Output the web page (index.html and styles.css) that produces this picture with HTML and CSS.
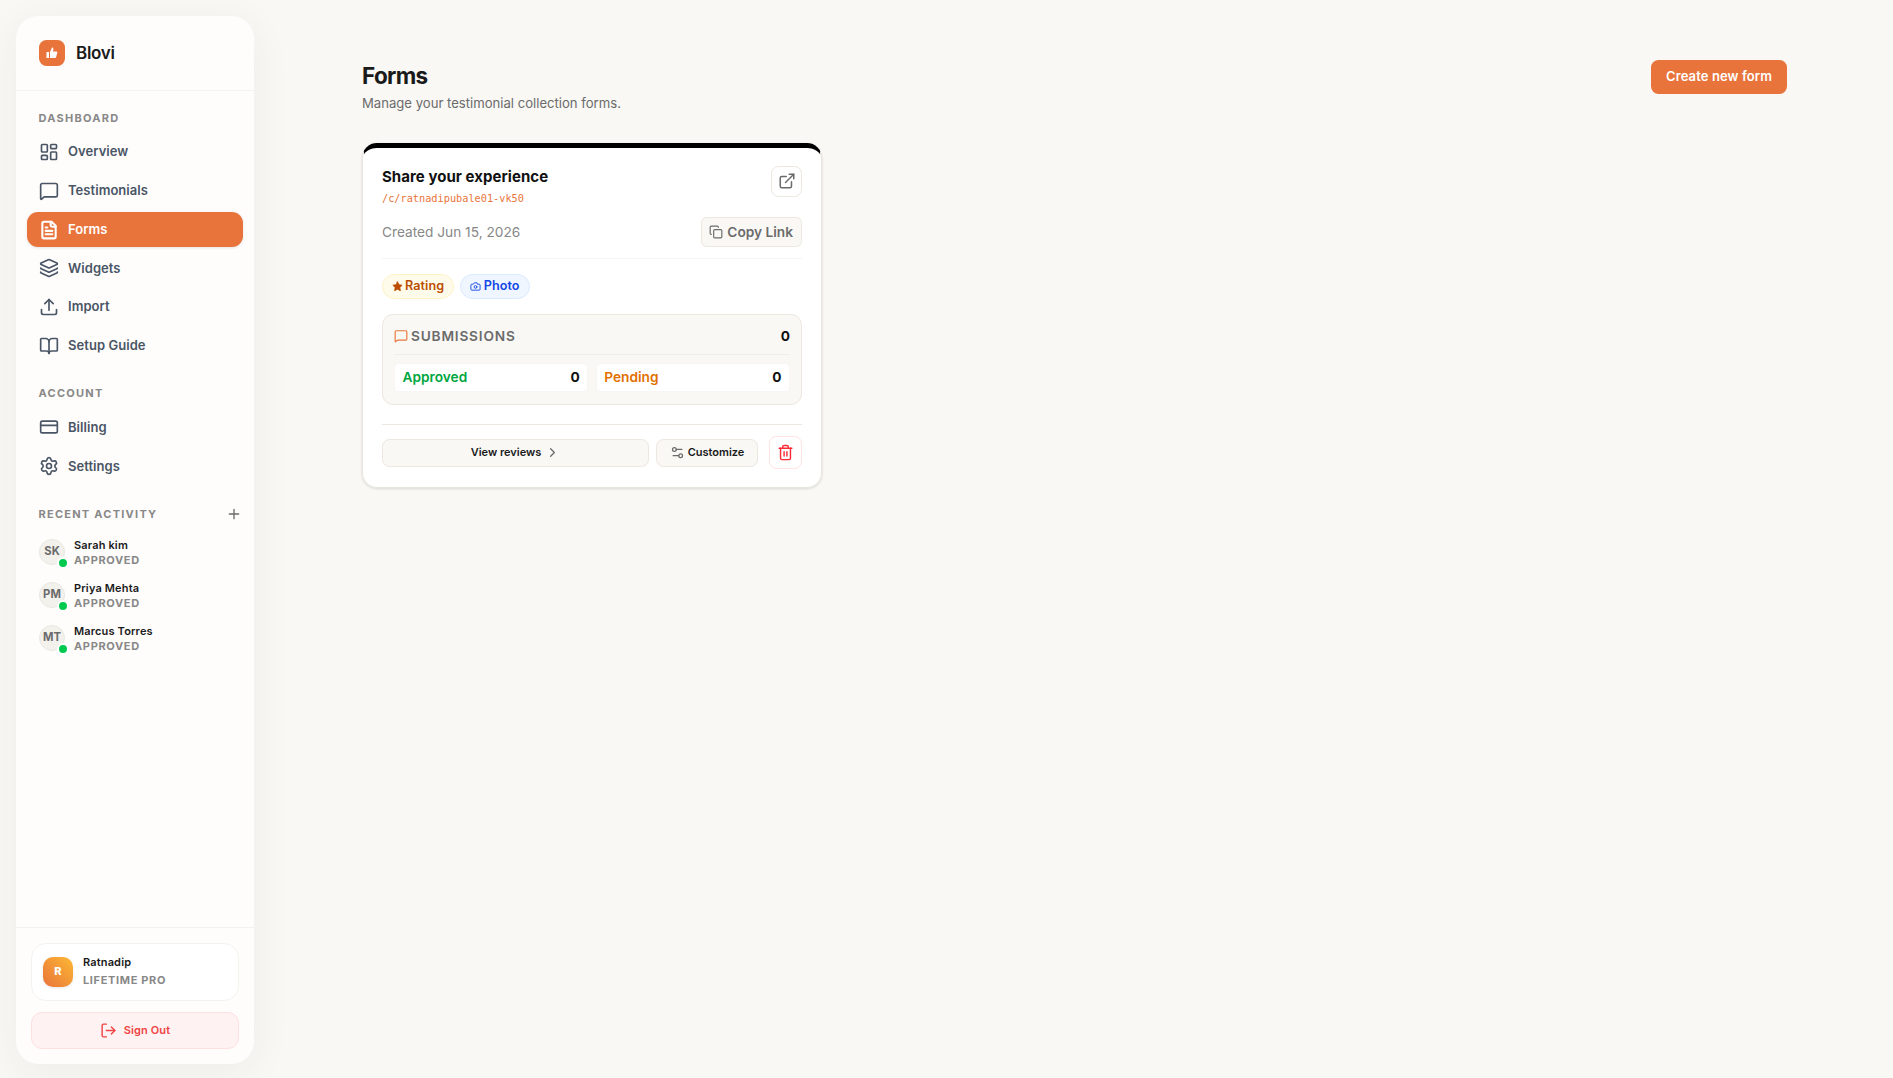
FILE: index.html
```html
<!DOCTYPE html>
<html lang="en">
<head>
    <meta charset="UTF-8">
    <meta name="viewport" content="width=device-width, initial-scale=1.0">
    <title>Forms - Blovi</title>
    <link rel="stylesheet" href="styles.css">
</head>
<body>
    <aside class="sidebar">
        <div class="brand">
            <span class="brand-logo">
                <svg viewBox="0 0 24 24" fill="currentColor"><path d="M1 10h5v12H1zM8 22V10l4-9c2 0 3.200 1.400 2.800 3.400L14 9h6.500c1.500 0 2.400 1.200 2 2.700l-2.200 8.300c-.3 1.200-1.200 2-2.500 2z"/></svg>
            </span>
            <span class="brand-name">Blovi</span>
        </div>

        <nav class="nav">
            <h2 class="nav-label">Dashboard</h2>
            <a class="nav-item" href="#">
                <svg class="icon" viewBox="0 0 24 24"><rect x="3" y="3" width="7" height="9" rx="1"/><rect x="14" y="3" width="7" height="5" rx="1"/><rect x="14" y="12" width="7" height="9" rx="1"/><rect x="3" y="16" width="7" height="5" rx="1"/></svg>
                <span>Overview</span>
            </a>
            <a class="nav-item" href="#">
                <svg class="icon" viewBox="0 0 24 24"><path d="M22 17a2 2 0 0 1-2 2H6.828a2 2 0 0 0-1.414.586l-2.202 2.202A.71.71 0 0 1 2 21.286V5a2 2 0 0 1 2-2h16a2 2 0 0 1 2 2z"/></svg>
                <span>Testimonials</span>
            </a>
            <a class="nav-item active" href="#">
                <svg class="icon" viewBox="0 0 24 24"><path d="M15 2H6a2 2 0 0 0-2 2v16a2 2 0 0 0 2 2h12a2 2 0 0 0 2-2V7Z"/><path d="M14 2v4a2 2 0 0 0 2 2h4"/><path d="M10 9H8"/><path d="M16 13H8"/><path d="M16 17H8"/></svg>
                <span>Forms</span>
            </a>
            <a class="nav-item" href="#">
                <svg class="icon" viewBox="0 0 24 24"><path d="M12.830 2.180a2 2 0 0 0-1.660 0L2.600 6.080a1 1 0 0 0 0 1.830l8.580 3.910a2 2 0 0 0 1.660 0l8.580-3.900a1 1 0 0 0 0-1.830z"/><path d="M2 12a1 1 0 0 0 .58.91l8.600 3.910a2 2 0 0 0 1.650 0l8.580-3.900A1 1 0 0 0 22 12"/><path d="M2 17a1 1 0 0 0 .58.91l8.600 3.910a2 2 0 0 0 1.650 0l8.580-3.900A1 1 0 0 0 22 17"/></svg>
                <span>Widgets</span>
            </a>
            <a class="nav-item" href="#">
                <svg class="icon" viewBox="0 0 24 24"><path d="M12 3v13"/><path d="m17 8-5-5-5 5"/><path d="M21 15v4a2 2 0 0 1-2 2H5a2 2 0 0 1-2-2v-4"/></svg>
                <span>Import</span>
            </a>
            <a class="nav-item" href="#">
                <svg class="icon" viewBox="0 0 24 24"><path d="M12 7v14"/><path d="M3 18a1 1 0 0 1-1-1V4a1 1 0 0 1 1-1h5a4 4 0 0 1 4 4 4 4 0 0 1 4-4h5a1 1 0 0 1 1 1v13a1 1 0 0 1-1 1h-6a3 3 0 0 0-3 3 3 3 0 0 0-3-3z"/></svg>
                <span>Setup Guide</span>
            </a>

            <h2 class="nav-label">Account</h2>
            <a class="nav-item" href="#">
                <svg class="icon" viewBox="0 0 24 24"><rect x="2" y="5" width="20" height="14" rx="2"/><path d="M2 10h20"/></svg>
                <span>Billing</span>
            </a>
            <a class="nav-item" href="#">
                <svg class="icon" viewBox="0 0 24 24"><path d="M9.671 4.136a2.340 2.340 0 0 1 4.659 0 2.340 2.340 0 0 0 3.319 1.915 2.340 2.340 0 0 1 2.330 4.033 2.340 2.340 0 0 0 0 3.831 2.340 2.340 0 0 1-2.330 4.033 2.340 2.340 0 0 0-3.319 1.915 2.340 2.340 0 0 1-4.659 0 2.340 2.340 0 0 0-3.320-1.915 2.340 2.340 0 0 1-2.330-4.033 2.340 2.340 0 0 0 0-3.831A2.340 2.340 0 0 1 6.350 6.051a2.340 2.340 0 0 0 3.319-1.915"/><circle cx="12" cy="12" r="3"/></svg>
                <span>Settings</span>
            </a>

            <h2 class="nav-label">
                Recent Activity
                <svg class="icon" viewBox="0 0 24 24"><path d="M5 12h14M12 5v14"/></svg>
            </h2>
            <ul class="activity">
                <li class="activity-item">
                    <span class="avatar">SK</span>
                    <div>
                        <p class="name">Sarah kim</p>
                        <p class="status">Approved</p>
                    </div>
                </li>
                <li class="activity-item">
                    <span class="avatar">PM</span>
                    <div>
                        <p class="name">Priya Mehta</p>
                        <p class="status">Approved</p>
                    </div>
                </li>
                <li class="activity-item">
                    <span class="avatar">MT</span>
                    <div>
                        <p class="name">Marcus Torres</p>
                        <p class="status">Approved</p>
                    </div>
                </li>
            </ul>
        </nav>

        <div class="sidebar-footer">
            <div class="user">
                <span class="user-avatar">R</span>
                <div>
                    <p class="name">Ratnadip</p>
                    <p class="status">Lifetime Pro</p>
                </div>
            </div>
            <button class="sign-out">
                <svg class="icon" viewBox="0 0 24 24"><path d="M9 21H5a2 2 0 0 1-2-2V5a2 2 0 0 1 2-2h4"/><path d="m16 17 5-5-5-5"/><path d="M21 12H9"/></svg>
                <span>Sign Out</span>
            </button>
        </div>
    </aside>

    <main class="main">
        <header class="page-header">
            <div>
                <h1>Forms</h1>
                <p class="subtitle">Manage your testimonial collection forms.</p>
            </div>
            <button class="create">Create new form</button>
        </header>

        <article class="card">
            <div class="card-head">
                <div>
                    <h3>Share your experience</h3>
                    <p class="slug">/c/ratnadipubale01-vk50</p>
                </div>
                <button class="open">
                    <svg class="icon" viewBox="0 0 24 24"><path d="M15 3h6v6"/><path d="M10 14 21 3"/><path d="M18 13v6a2 2 0 0 1-2 2H5a2 2 0 0 1-2-2V8a2 2 0 0 1 2-2h6"/></svg>
                </button>
            </div>
            <div class="card-meta">
                <span class="created">Created Jun 15, 2026</span>
                <button class="copy">
                    <svg class="icon" viewBox="0 0 24 24"><rect x="8" y="8" width="14" height="14" rx="2"/><path d="M4 16c-1.100 0-2-.9-2-2V4c0-1.100.9-2 2-2h10c1.100 0 2 .9 2 2"/></svg>
                    <span>Copy Link</span>
                </button>
            </div>
            <div class="tags">
                <span class="tag rating">
                    <svg class="icon" viewBox="0 0 24 24"><path d="m12 2 3.090 6.260L22 9.270l-5 4.870 1.180 6.880L12 17.770l-6.180 3.250L7 14.140 2 9.270l6.910-1.010z"/></svg>
                    <span>Rating</span>
                </span>
                <span class="tag photo">
                    <svg class="icon" viewBox="0 0 24 24"><path d="M14.500 4h-5L7 7H4a2 2 0 0 0-2 2v9a2 2 0 0 0 2 2h16a2 2 0 0 0 2-2V9a2 2 0 0 0-2-2h-3z"/><circle cx="12" cy="13" r="3"/></svg>
                    <span>Photo</span>
                </span>
            </div>
            <div class="submissions">
                <div class="total">
                    <svg class="icon" viewBox="0 0 24 24"><path d="M22 17a2 2 0 0 1-2 2H6.828a2 2 0 0 0-1.414.586l-2.202 2.202A.71.71 0 0 1 2 21.286V5a2 2 0 0 1 2-2h16a2 2 0 0 1 2 2z"/></svg>
                    <span class="total-label">Submissions</span>
                    <b>0</b>
                </div>
                <div class="counts">
                    <div class="count approved"><span>Approved</span><b>0</b></div>
                    <div class="count pending"><span>Pending</span><b>0</b></div>
                </div>
            </div>
            <div class="actions">
                <button class="view">
                    <span>View reviews</span>
                    <svg class="icon" viewBox="0 0 24 24"><path d="m9 18 6-6-6-6"/></svg>
                </button>
                <button class="customize">
                    <svg class="icon" viewBox="0 0 24 24"><path d="M14 17H5"/><path d="M19 7h-9"/><circle cx="17" cy="17" r="3"/><circle cx="7" cy="7" r="3"/></svg>
                    <span>Customize</span>
                </button>
                <button class="delete">
                    <svg class="icon" viewBox="0 0 24 24"><path d="M10 11v6M14 11v6"/><path d="M19 6v14a2 2 0 0 1-2 2H7a2 2 0 0 1-2-2V6"/><path d="M3 6h18"/><path d="M8 6V4a2 2 0 0 1 2-2h4a2 2 0 0 1 2 2v2"/></svg>
                </button>
            </div>
        </article>
    </main>
</body>
</html>
```
FILE: styles.css
```css
* {
    margin: 0;
    padding: 0;
    box-sizing: border-box;
}

html {
    font-size: 15px;
}

body {
    display: flex;
    height: 100vh;
    background: #f9f8f5;
    color: #1a1a1a;
    font-family: Inter, "Liberation Sans", sans-serif;
    line-height: 1.5;
}

button {
    font: inherit;
    color: inherit;
    cursor: pointer;
}

a {
    text-decoration: none;
}

ul {
    list-style: none;
}

b {
    color: #111;
    font-weight: 700;
}

svg {
    display: block;
    flex-shrink: 0;
}

.icon {
    width: 20px;
    height: 20px;
    fill: none;
    stroke: currentColor;
    stroke-width: 2;
    stroke-linecap: round;
    stroke-linejoin: round;
}

/* Sidebar */
.sidebar {
    display: flex;
    flex-direction: column;
    width: 238px;
    height: 1048px;
    margin: 16px 0 0 16px;
    flex-shrink: 0;
    background: #fefdfc;
    border-radius: 22.500px;
    box-shadow: 0 8px 40px rgba(60, 50, 30, 0.06);
}

.brand {
    display: flex;
    align-items: center;
    gap: 11px;
    height: 75px;
    padding: 0 23px;
    border-bottom: 1px solid #f3f2ef;
}

.brand-logo {
    display: flex;
    align-items: center;
    justify-content: center;
    width: 26px;
    height: 26px;
    border-radius: 7.500px;
    background: #e8743b;
    color: #fff;
}

.brand-logo svg {
    width: 12px;
    height: 12px;
}

.brand-name {
    padding-top: 2px;
    font-size: 17px;
    font-weight: 600;
    letter-spacing: -0.300px;
}

.nav {
    flex: 1;
    padding: 0 11px;
}

.nav-label {
    display: flex;
    align-items: center;
    justify-content: space-between;
    height: 17px;
    margin: 21.500px 4px 8px 11.500px;
    color: #888;
    font-size: 11px;
    font-weight: 700;
    letter-spacing: 1.250px;
    text-transform: uppercase;
}

.nav-label:first-child {
    margin-top: 19px;
    margin-bottom: 7.500px;
}

.nav-label .icon {
    width: 16px;
    height: 16px;
    margin-right: -3px;
    color: #6b6b6b;
}

.nav-item {
    display: flex;
    align-items: center;
    gap: 9px;
    height: 35px;
    margin-bottom: 3.800px;
    padding-left: 12px;
    border-radius: 11px;
    color: #4a5565;
    font-size: 13px;
    font-weight: 600;
    letter-spacing: 0.050px;
}

.nav-item.active {
    background: #e8743b;
    color: #fff;
    box-shadow: 0 1px 3px rgba(0, 0, 0, 0.1);
}

.nav-item.active .icon {
    stroke-width: 2.500;
}

.activity-item {
    display: flex;
    align-items: center;
    gap: 9px;
    height: 43px;
    padding-left: 12px;
}

.activity-item div {
    padding-top: 2px;
}

.avatar {
    position: relative;
    display: flex;
    align-items: center;
    justify-content: center;
    width: 26px;
    height: 26px;
    padding-bottom: 1px;
    border: 1px solid #eae8e2;
    border-radius: 50%;
    background: #f3f1ec;
    color: #6b6b6b;
    font-size: 11.250px;
    font-weight: 700;
}

.avatar::after {
    content: "";
    position: absolute;
    right: -5px;
    bottom: -5px;
    width: 8px;
    height: 8px;
    border: 2px solid #fff;
    border-radius: 50%;
    background: #00c950;
}

.name {
    font-size: 11px;
    font-weight: 600;
    letter-spacing: 0.150px;
    line-height: 15px;
}

.status {
    color: #888;
    font-size: 11px;
    font-weight: 700;
    letter-spacing: 0.650px;
    line-height: 15px;
    text-transform: uppercase;
}

.sidebar-footer {
    padding: 15px;
    border-top: 1px solid #f3f2ef;
}

.user {
    display: flex;
    align-items: center;
    gap: 10px;
    height: 58px;
    margin-bottom: 11px;
    padding: 0 11px;
    border: 1px solid #f3f2ef;
    border-radius: 15px;
    background: #fff;
}

.user p {
    line-height: 18px;
}

.user div {
    padding-bottom: 2px;
}

.user-avatar {
    display: flex;
    align-items: center;
    justify-content: center;
    width: 30px;
    height: 30px;
    padding-bottom: 1px;
    border-radius: 10px;
    background: linear-gradient(45deg, #e8743b, #fdb833);
    box-shadow: 0 1px 3px rgba(0, 0, 0, 0.1);
    color: #fff;
    font-size: 11px;
    font-weight: 800;
}

.sign-out {
    display: flex;
    align-items: center;
    justify-content: center;
    gap: 7px;
    width: 100%;
    height: 37px;
    border: 1px solid #ffe0e0;
    border-radius: 11px;
    background: #fef2f2;
    color: #ef4444;
    font-size: 11px;
    font-weight: 600;
    letter-spacing: 0.120px;
}

.sign-out .icon {
    width: 17px;
    height: 17px;
}

/* Main */
.main {
    flex: 1;
    padding: 60px 106px 0 108px;
}

.page-header {
    display: flex;
    align-items: flex-start;
    justify-content: space-between;
    margin-bottom: 29.300px;
}

h1 {
    margin-bottom: 2px;
    font-size: 22.500px;
    font-weight: 700;
    letter-spacing: -0.650px;
    line-height: 32px;
}

.subtitle {
    color: #6b6b6b;
    font-size: 13.125px;
}

.create {
    height: 34px;
    padding: 0 15px;
    border: 0;
    border-radius: 7.500px;
    background: #e8743b;
    color: #fff;
    font-size: 13px;
    font-weight: 600;
    letter-spacing: 0.100px;
}

.card {
    width: 460px;
    padding: 18px 19px;
    border: 1px solid #e8e6df;
    border-top: 5px solid #000;
    border-radius: 15px;
    background: #fff;
    box-shadow: 0 1px 3px rgba(0, 0, 0, 0.12);
}

.card-head {
    display: flex;
    justify-content: space-between;
    height: 51px;
}

h3 {
    color: #111;
    font-size: 15px;
    font-weight: 700;
    letter-spacing: 0.050px;
}

.slug {
    margin-top: 3px;
    color: #e8743b;
    font-family: "DejaVu Sans Mono", monospace;
    font-size: 10.250px;
}

.open,
.copy,
.view,
.customize,
.delete {
    display: flex;
    align-items: center;
    justify-content: center;
    border: 1px solid #ece7df;
    border-radius: 7.500px;
    background: #f9f8f5;
}

.open {
    width: 31px;
    height: 31px;
    background: #fff;
    color: #6b6b6b;
}

.open .icon {
    width: 18px;
    height: 18px;
}

.card-meta {
    display: flex;
    align-items: center;
    justify-content: space-between;
    height: 42px;
    padding-bottom: 11px;
    border-bottom: 1px solid #f5f4f0;
    font-size: 13.700px;
}

.created {
    color: #888;
}

.copy {
    gap: 4px;
    height: 30px;
    padding: 0 8px 0 7px;
    border-radius: 5.600px;
    color: #6b6b6b;
    font-weight: 600;
}

.copy .icon {
    width: 14px;
    height: 14px;
}

.tags {
    display: flex;
    gap: 6px;
    padding: 15px 0;
}

.tag {
    display: flex;
    align-items: center;
    gap: 2px;
    height: 25px;
    padding: 0 9px;
    border: 1px solid #fef3c6;
    border-radius: 13px;
    font-size: 12.600px;
    font-weight: 600;
    letter-spacing: 0.080px;
}

.tag .icon {
    width: 11px;
    height: 11px;
}

.rating {
    background: #fffbeb;
    color: #bb4d00;
}

.rating .icon {
    fill: currentColor;
}

.photo {
    gap: 2.500px;
    border-color: #dbeafe;
    background: #eff6ff;
    color: #1447e6;
}

.submissions {
    height: 91px;
    padding: 11px;
    border: 1px solid #ece7df;
    border-radius: 11px;
    background: #f9f8f5;
    font-size: 13.700px;
    font-weight: 600;
}

.total {
    display: flex;
    align-items: center;
    gap: 3px;
    height: 29px;
    padding-bottom: 7px;
    border-bottom: 1px solid #f0eee9;
}

.total .icon {
    width: 14px;
    height: 14px;
    color: #e8743b;
}

.total-label {
    flex: 1;
    color: #6b6b6b;
    letter-spacing: 0.800px;
    text-transform: uppercase;
}

.counts {
    display: grid;
    grid-template-columns: 1fr 1fr;
    gap: 7.500px;
    padding-top: 8px;
}

.count {
    display: flex;
    align-items: center;
    justify-content: space-between;
    height: 29px;
    padding: 0 7.500px;
    border: 1px solid #f7f6f2;
    border-radius: 4px;
    background: #fff;
}

.approved span {
    color: #00a63e;
}

.pending span {
    color: #e17100;
}

.actions {
    display: flex;
    align-items: center;
    gap: 7px;
    margin-top: 19px;
    padding-top: 11px;
    border-top: 1px solid #ece7df;
    font-size: 11px;
    font-weight: 600;
    letter-spacing: 0.170px;
}

.view {
    flex: 1;
    gap: 4px;
    height: 28px;
    margin-top: 1px;
}

.customize {
    gap: 3px;
    width: 102px;
    height: 28px;
    margin-top: 1px;
}

.view span,
.customize span {
    padding-bottom: 1px;
}

.delete {
    width: 33px;
    height: 33px;
    margin-left: 4px;
    border-color: #ffe2e2;
    background: #fff;
    color: #fb2c36;
}

.actions .icon {
    width: 15px;
    height: 15px;
    color: #6b6b6b;
}

.actions .delete .icon {
    width: 17px;
    height: 17px;
    color: #fb2c36;
}
```
